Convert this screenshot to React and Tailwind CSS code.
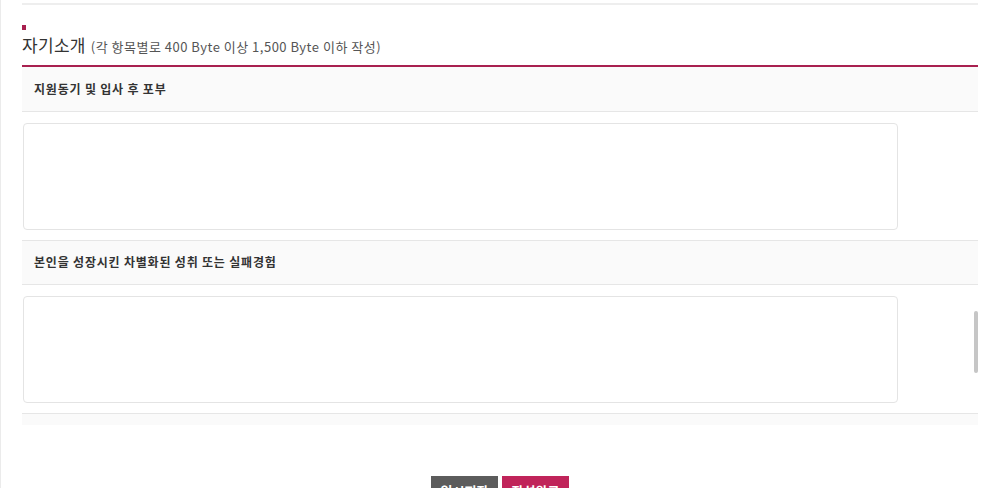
export default function App() {
  const items = ['지원동기 및 입사 후 포부', '본인을 성장시킨 차별화된 성취 또는 실패경험'];

  return (
    <div className="relative h-[488px] overflow-hidden bg-white border-l border-[#ebebeb] pl-[21px] pr-[22px] font-['Noto_Sans_CJK_KR','Noto_Sans',sans-serif] text-[#333]">
      <div className="mt-[3px] h-[2px] bg-[#eeeeee]" />

      {/* section title */}
      <div className="mt-[20px] h-[5px] w-[4px] bg-[#a8204f]" />
      <div className="flex items-baseline gap-[5px] pt-[2px] pb-[7px] border-b-2 border-[#a8204f]">
        <h2 className="text-[17px] leading-[1.5] tracking-[0.3px] text-[#333]">자기소개</h2>
        <span className="text-[13px] tracking-[0.5px] text-[#555]">
          (각 항목별로 400 Byte 이상 1,500 Byte 이하 작성)
        </span>
      </div>

      {items.map((label, i) => (
        <div key={label}>
          <div
            className={`flex items-center pl-[12px] bg-[#fafafa] border-b border-[#e6e6e6] ${
              i === 0 ? 'h-[45px]' : 'h-[45px] border-t'
            }`}
          >
            <span className="text-[12px] font-semibold tracking-[0.8px] text-[#333]">{label}</span>
          </div>
          <div className="pt-[11px] pb-[10px]">
            <textarea className="block ml-[1px] h-[107px] w-[875px] resize-none rounded-[4px] border border-[#e4e4e4] bg-white outline-none" />
          </div>
        </div>
      ))}
      <div className="h-[12px] border-t border-[#e6e6e6] bg-[#fafafa]" />

      {/* actions */}
      <div className="mt-[51px] flex justify-center gap-[4px]">
        <button className="h-[30px] w-[67px] bg-[#5c5c5c] text-[13px] font-bold text-white">임시저장</button>
        <button className="h-[30px] w-[67px] bg-[#c0245a] text-[13px] font-bold text-white">작성완료</button>
      </div>

      {/* overlay scrollbar */}
      <div className="absolute left-[973px] top-[311px] h-[62px] w-[4px] rounded-full bg-[#c6c6c6]" />
    </div>
  );
}
